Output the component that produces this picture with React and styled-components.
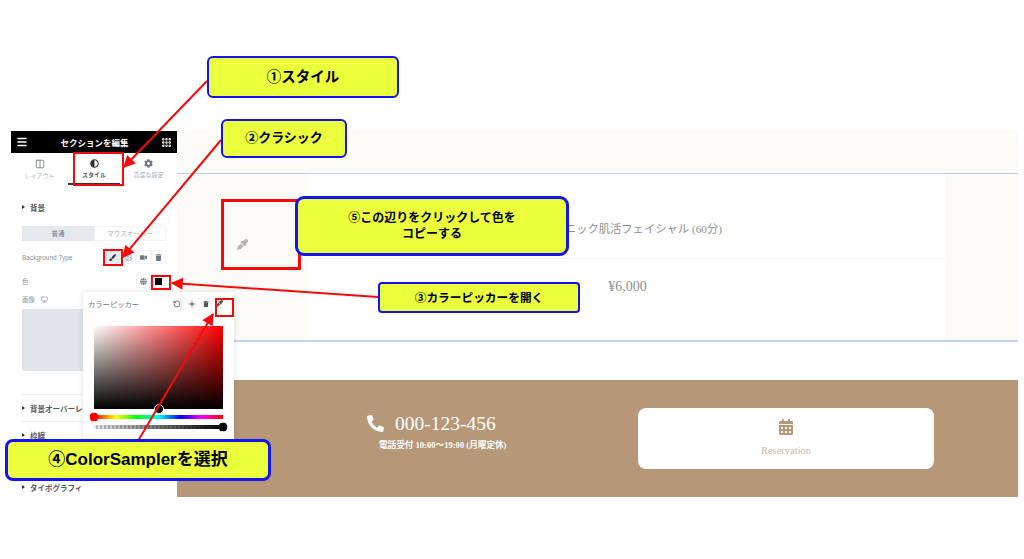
import React from "react";
import styled, { createGlobalStyle } from "styled-components";
import { FaAdjust, FaCalendarAlt, FaCog, FaEyeDropper, FaGlobe, FaPaintBrush, FaPhoneAlt, FaTrash, FaVideo } from "react-icons/fa";
import { Columns2, Grip, Image, Menu, Monitor, Plus, RotateCcw } from "lucide-react";

const SANS = `"Liberation Sans", "Noto Sans CJK JP", sans-serif`;
const JP = `"Noto Sans CJK JP", "Liberation Sans", sans-serif`;
const SERIF = `"Liberation Serif", "Noto Sans CJK JP", serif`;

const GlobalStyle = createGlobalStyle`
  html, body { margin: 0; background: #fff; }
  * { box-sizing: border-box; }
`;

const Stage = styled.div`
  position: relative;
  width: 1024px;
  height: 559px;
  padding: 131px 6px 62px 11px;
  display: flex;
  overflow: hidden;
  font-family: ${JP};
`;

/* editor panel */
const Sidebar = styled.aside`
  width: 166px;
  flex: none;
  background: #fff;
  display: flex;
  flex-direction: column;
  overflow: hidden;
`;

const TopBar = styled.header`
  height: 22px;
  background: #000;
  color: #fff;
  display: flex;
  align-items: center;
  justify-content: space-between;
  padding: 0 5px;
  font-size: 8.5px;
  font-weight: 700;
`;

const Tabs = styled.nav`
  height: 33px;
  display: grid;
  grid-template-columns: 57px 52px 57px;
`;

const Tab = styled.div`
  display: flex;
  flex-direction: column;
  align-items: center;
  gap: 2px;
  padding-top: 6px;
  font-size: 6px;
  color: ${p => (p.$active ? "#55595e" : "#a4afb7")};
  font-weight: ${p => (p.$active ? 700 : 400)};
  border-bottom: 2px solid ${p => (p.$active ? "#333" : "transparent")};
  height: 32px;
  svg { color: ${p => (p.$active ? "#333" : "#6d7882")}; }
`;

const Section = styled.div`
  padding: 14px 11px 0;
`;

const SectionTitle = styled.div`
  display: flex;
  align-items: center;
  gap: 5px;
  height: ${p => p.$h || 14}px;
  font-size: 7.5px;
  font-weight: 700;
  color: #55595c;
  white-space: nowrap;
  border-top: ${p => (p.$line ? "1px solid #eef0f2" : "none")};
  &::before {
    content: "";
    border-left: 3px solid #333;
    border-top: 2px solid transparent;
    border-bottom: 2px solid transparent;
  }
`;

const Toggle = styled.div`
  margin-top: 12px;
  height: 15px;
  display: grid;
  grid-template-columns: 72px 72px;
  font-size: 6.5px;
  text-align: center;
`;

const ToggleItem = styled.div`
  background: ${p => (p.$on ? "#e6e9ec" : "#fff")};
  color: ${p => (p.$on ? "#6d7882" : "#a4afb7")};
  border: 1px solid ${p => (p.$on ? "#e6e9ec" : "#f1f3f5")};
  line-height: 13px;
`;

const Field = styled.div`
  display: flex;
  align-items: center;
  justify-content: space-between;
  height: ${p => p.$h}px;
  margin-top: ${p => p.$top || 0}px;
  font-size: 6.5px;
  color: #8a939b;
`;

const FieldLabel = styled.span`
  display: flex;
  align-items: center;
  gap: 6px;
  font-family: ${SANS};
`;

const IconRow = styled.div`
  display: flex;
  align-items: center;
`;

const IconBtn = styled.div`
  width: ${p => p.$w || 15}px;
  height: 14px;
  display: flex;
  align-items: center;
  justify-content: center;
  color: #6d7882;
  background: ${p => (p.$on ? "#e6e9ec" : "#fff")};
  border: 1px solid #f1f3f5;
  svg { color: ${p => (p.$on ? "#33394a" : "inherit")}; }
`;

const Swatch = styled.div`
  width: 7px;
  height: 7px;
  background: #000;
`;

const Preview = styled.div`
  margin-top: 4px;
  width: 100%;
  height: 62px;
  background: #e1e4e8;
`;

const SideBlock = styled.div`
  padding: 0 11px;
  margin-top: ${p => p.$top}px;
`;

/* colour picker popup */
const Picker = styled.div`
  position: absolute;
  left: 83px;
  top: 292px;
  width: 151px;
  height: 156px;
  background: #fff;
  box-shadow: 0 0 6px rgba(0, 0, 0, 0.12);
  padding: 0 11px;
  z-index: 1;
`;

const PickerHead = styled.div`
  height: 23px;
  margin-left: -6px;
  display: flex;
  align-items: center;
  justify-content: space-between;
  font-size: 7.3px;
  color: #6d7882;
`;

const PickerTools = styled.div`
  display: flex;
  align-items: center;
  gap: 7px;
  color: #555;
`;

const Saturation = styled.div`
  position: relative;
  margin-top: 11px;
  height: 83px;
  background: linear-gradient(to top, #000, transparent), linear-gradient(to right, #fff, #f00);
`;

const Knob = styled.span`
  position: absolute;
  width: ${p => p.$size}px;
  height: ${p => p.$size}px;
  border-radius: 50%;
  background: ${p => p.$color};
  border: 1px solid ${p => p.$ring || "transparent"};
  left: ${p => p.$left};
  top: 50%;
  transform: translate(-50%, -50%);
`;

const SatKnob = styled(Knob)`
  top: 100%;
`;

const Slider = styled.div`
  position: relative;
  height: 4px;
  margin-top: ${p => p.$top}px;
  background: ${p => p.$bg};
`;

const HUE = "linear-gradient(to right, #f00, #ff0 17%, #0f0 33%, #0ff 50%, #00f 67%, #f0f 83%, #f00)";
const ALPHA = "linear-gradient(to right, rgba(0, 0, 0, 0.08), #000), repeating-linear-gradient(to right, #fff 0 2px, #ccc 2px 4px)";

/* page behind the panel */
const Page = styled.main`
  flex: 1;
  display: flex;
  flex-direction: column;
  font-family: ${SERIF};
`;

const Band = styled.div`
  height: 43px;
  background: #fdfbf8;
  border-bottom: 1px solid #b9cbe8;
  flex: none;
`;

const Row = styled.div`
  height: 168px;
  flex: none;
  display: grid;
  grid-template-columns: 131px 637px 73px;
  border-bottom: 2px solid #c3d2ef;
`;

const CreamCol = styled.div`
  background: #fdfbf8;
`;

const Cursor = styled.div`
  margin: 65px 0 0 60px;
  color: #b4b4b4;
  font-size: 11px;
  line-height: 1;
  width: 11px;
`;

const MenuCell = styled.div`
  display: flex;
  flex-direction: column;
  color: #8f8f8f;
  text-align: center;
`;

const MenuName = styled.div`
  height: 85px;
  padding-top: 45px;
  font-size: 11.3px;
  line-height: 20px;
  border-bottom: 1px solid #f3f3f3;
`;

const MenuPrice = styled.div`
  padding: 18px 0 0 2px;
  font-size: 14px;
  line-height: 20px;
`;

const Footer = styled.footer`
  margin-top: 38px;
  height: 117px;
  flex: none;
  background: #b69878;
  display: grid;
  grid-template-columns: 461px 296px;
  align-items: center;
  color: #fff;
`;

const Contact = styled.div`
  display: flex;
  flex-direction: column;
  align-items: flex-start;
  padding-left: 190px;
  margin-top: -16px;
`;

const Phone = styled.div`
  display: flex;
  align-items: center;
  gap: 11px;
  font-size: 19.5px;
  line-height: 26px;
`;

const Hours = styled.div`
  margin: 2px 0 0 12px;
  font-size: 8.6px;
  line-height: 12px;
  font-weight: 700;
  white-space: nowrap;
`;

const Reserve = styled.div`
  height: 61px;
  background: #fff;
  border-radius: 8px;
  display: flex;
  flex-direction: column;
  align-items: center;
  padding-top: 11px;
  gap: 10px;
  color: #b69878;
  font-size: 10.5px;
  span { color: #c9b8a3; }
`;

/* annotations on top of the screenshot */
const Callout = styled.div`
  position: absolute;
  z-index: 3;
  left: ${p => p.$x}px;
  top: ${p => p.$y}px;
  width: ${p => p.$w}px;
  height: ${p => p.$h}px;
  background: #ecff3c;
  border: ${p => p.$b || 2}px solid #1414f0;
  border-radius: ${p => p.$r || 6}px;
  display: flex;
  align-items: center;
  justify-content: center;
  text-align: center;
  font-family: ${SANS};
  font-weight: 700;
  font-size: ${p => p.$size}px;
  line-height: ${p => p.$lh || 1.3};
  color: #000;
`;

const RedBox = styled.div`
  position: absolute;
  z-index: 2;
  left: ${p => p.$x}px;
  top: ${p => p.$y}px;
  width: ${p => p.$w}px;
  height: ${p => p.$h}px;
  border: ${p => p.$b || 2}px solid #f50a0a;
`;

const Arrows = styled.svg`
  position: absolute;
  z-index: 2;
  left: 0;
  top: 0;
  width: 1024px;
  height: 559px;
  pointer-events: none;
`;

const ARROWS = [
  [207, 81, 124, 167],
  [221, 140, 123, 257],
  [378, 297, 172, 283],
  [138, 441, 213, 314],
];

const BOXES = [
  [73, 152, 51, 34, 2],
  [103, 249, 20, 17, 2],
  [151, 275, 20, 15, 2],
  [215, 298, 19, 19, 2],
  [221, 199, 80, 71, 3],
];

export default function App() {
  return (
    <Stage>
      <GlobalStyle />
      <Sidebar>
        <TopBar>
          <Menu size={12} strokeWidth={3} />
          セクションを編集
          <Grip size={11} strokeWidth={3.5} />
        </TopBar>
        <Tabs>
          <Tab><Columns2 size={10} />レイアウト</Tab>
          <Tab $active><FaAdjust size={9} />スタイル</Tab>
          <Tab><FaCog size={9} />高度な設定</Tab>
        </Tabs>
        <Section>
          <SectionTitle>背景</SectionTitle>
          <Toggle>
            <ToggleItem $on>普通</ToggleItem>
            <ToggleItem>マウスオーバー</ToggleItem>
          </Toggle>
          <Field $h={16} $top={8}>
            <FieldLabel>Background Type</FieldLabel>
            <IconRow>
              <IconBtn $on $w={18}><FaPaintBrush size={7} /></IconBtn>
              <IconBtn><Image size={7} /></IconBtn>
              <IconBtn><FaVideo size={7} /></IconBtn>
              <IconBtn><FaTrash size={7} /></IconBtn>
            </IconRow>
          </Field>
          <Field $h={14} $top={9}>
            <FieldLabel>色</FieldLabel>
            <IconRow>
              <IconBtn><FaGlobe size={7} /></IconBtn>
              <IconBtn><Swatch /></IconBtn>
            </IconRow>
          </Field>
          <Field $h={12} $top={5}>
            <FieldLabel>画像 <Monitor size={7} /></FieldLabel>
          </Field>
          <Preview />
        </Section>
        <SideBlock $top={23}>
          <SectionTitle $h={27} $line>背景オーバーレイ</SectionTitle>
          <SectionTitle $h={27} $line>枠線</SectionTitle>
        </SideBlock>
        <SideBlock $top={32}>
          <SectionTitle $h={14}>タイポグラフィ</SectionTitle>
        </SideBlock>
      </Sidebar>

      <Page>
        <Band />
        <Row>
          <CreamCol><Cursor><FaEyeDropper /></Cursor></CreamCol>
          <MenuCell>
            <MenuName>オーガニック肌活フェイシャル (60分)</MenuName>
            <MenuPrice>¥6,000</MenuPrice>
          </MenuCell>
          <CreamCol />
        </Row>
        <Footer>
          <Contact>
            <Phone><FaPhoneAlt size={17} />000-123-456</Phone>
            <Hours>電話受付 10:00〜19:00 (月曜定休)</Hours>
          </Contact>
          <Reserve>
            <FaCalendarAlt size={16} />
            <span>Reservation</span>
          </Reserve>
        </Footer>
      </Page>

      <Picker>
        <PickerHead>
          カラーピッカー
          <PickerTools>
            <RotateCcw size={8} strokeWidth={2.5} />
            <Plus size={8} strokeWidth={3} />
            <FaTrash size={6} />
            <FaEyeDropper size={7} />
          </PickerTools>
        </PickerHead>
        <Saturation>
          <SatKnob $size={10} $color="#000" $ring="#fff" $left="50%" />
        </Saturation>
        <Slider $top={6} $bg={HUE}>
          <Knob $size={9} $color="#f00" $left="0%" />
        </Slider>
        <Slider $top={6} $bg={ALPHA}>
          <Knob $size={9} $color="#000" $left="100%" />
        </Slider>
      </Picker>

      <Arrows viewBox="0 0 1024 559">
        <defs>
          <marker id="head" viewBox="0 0 10 10" refX="9" refY="5" markerWidth="7" markerHeight="6" orient="auto">
            <path d="M0 0L10 5L0 10z" fill="#f50a0a" />
          </marker>
        </defs>
        {ARROWS.map(([x1, y1, x2, y2]) => (
          <line key={x1} x1={x1} y1={y1} x2={x2} y2={y2} stroke="#f50a0a" strokeWidth="2" markerEnd="url(#head)" />
        ))}
      </Arrows>

      {BOXES.map(([x, y, w, h, b]) => (
        <RedBox key={x} $x={x} $y={y} $w={w} $h={h} $b={b} />
      ))}

      <Callout $x={207} $y={56} $w={192} $h={42} $size={14.5}>①スタイル</Callout>
      <Callout $x={221} $y={119} $w={126} $h={39} $size={13}>②クラシック</Callout>
      <Callout $x={295} $y={196} $w={274} $h={60} $size={12} $r={9} $b={3} $lh={1.35}>⑤この辺りをクリックして色を<br />コピーする</Callout>
      <Callout $x={378} $y={282} $w={202} $h={31} $size={11.7} $r={4}>③カラーピッカーを開く</Callout>
      <Callout $x={5} $y={439} $w={266} $h={42} $size={17} $r={8} $b={3}>④ColorSamplerを選択</Callout>
    </Stage>
  );
}
